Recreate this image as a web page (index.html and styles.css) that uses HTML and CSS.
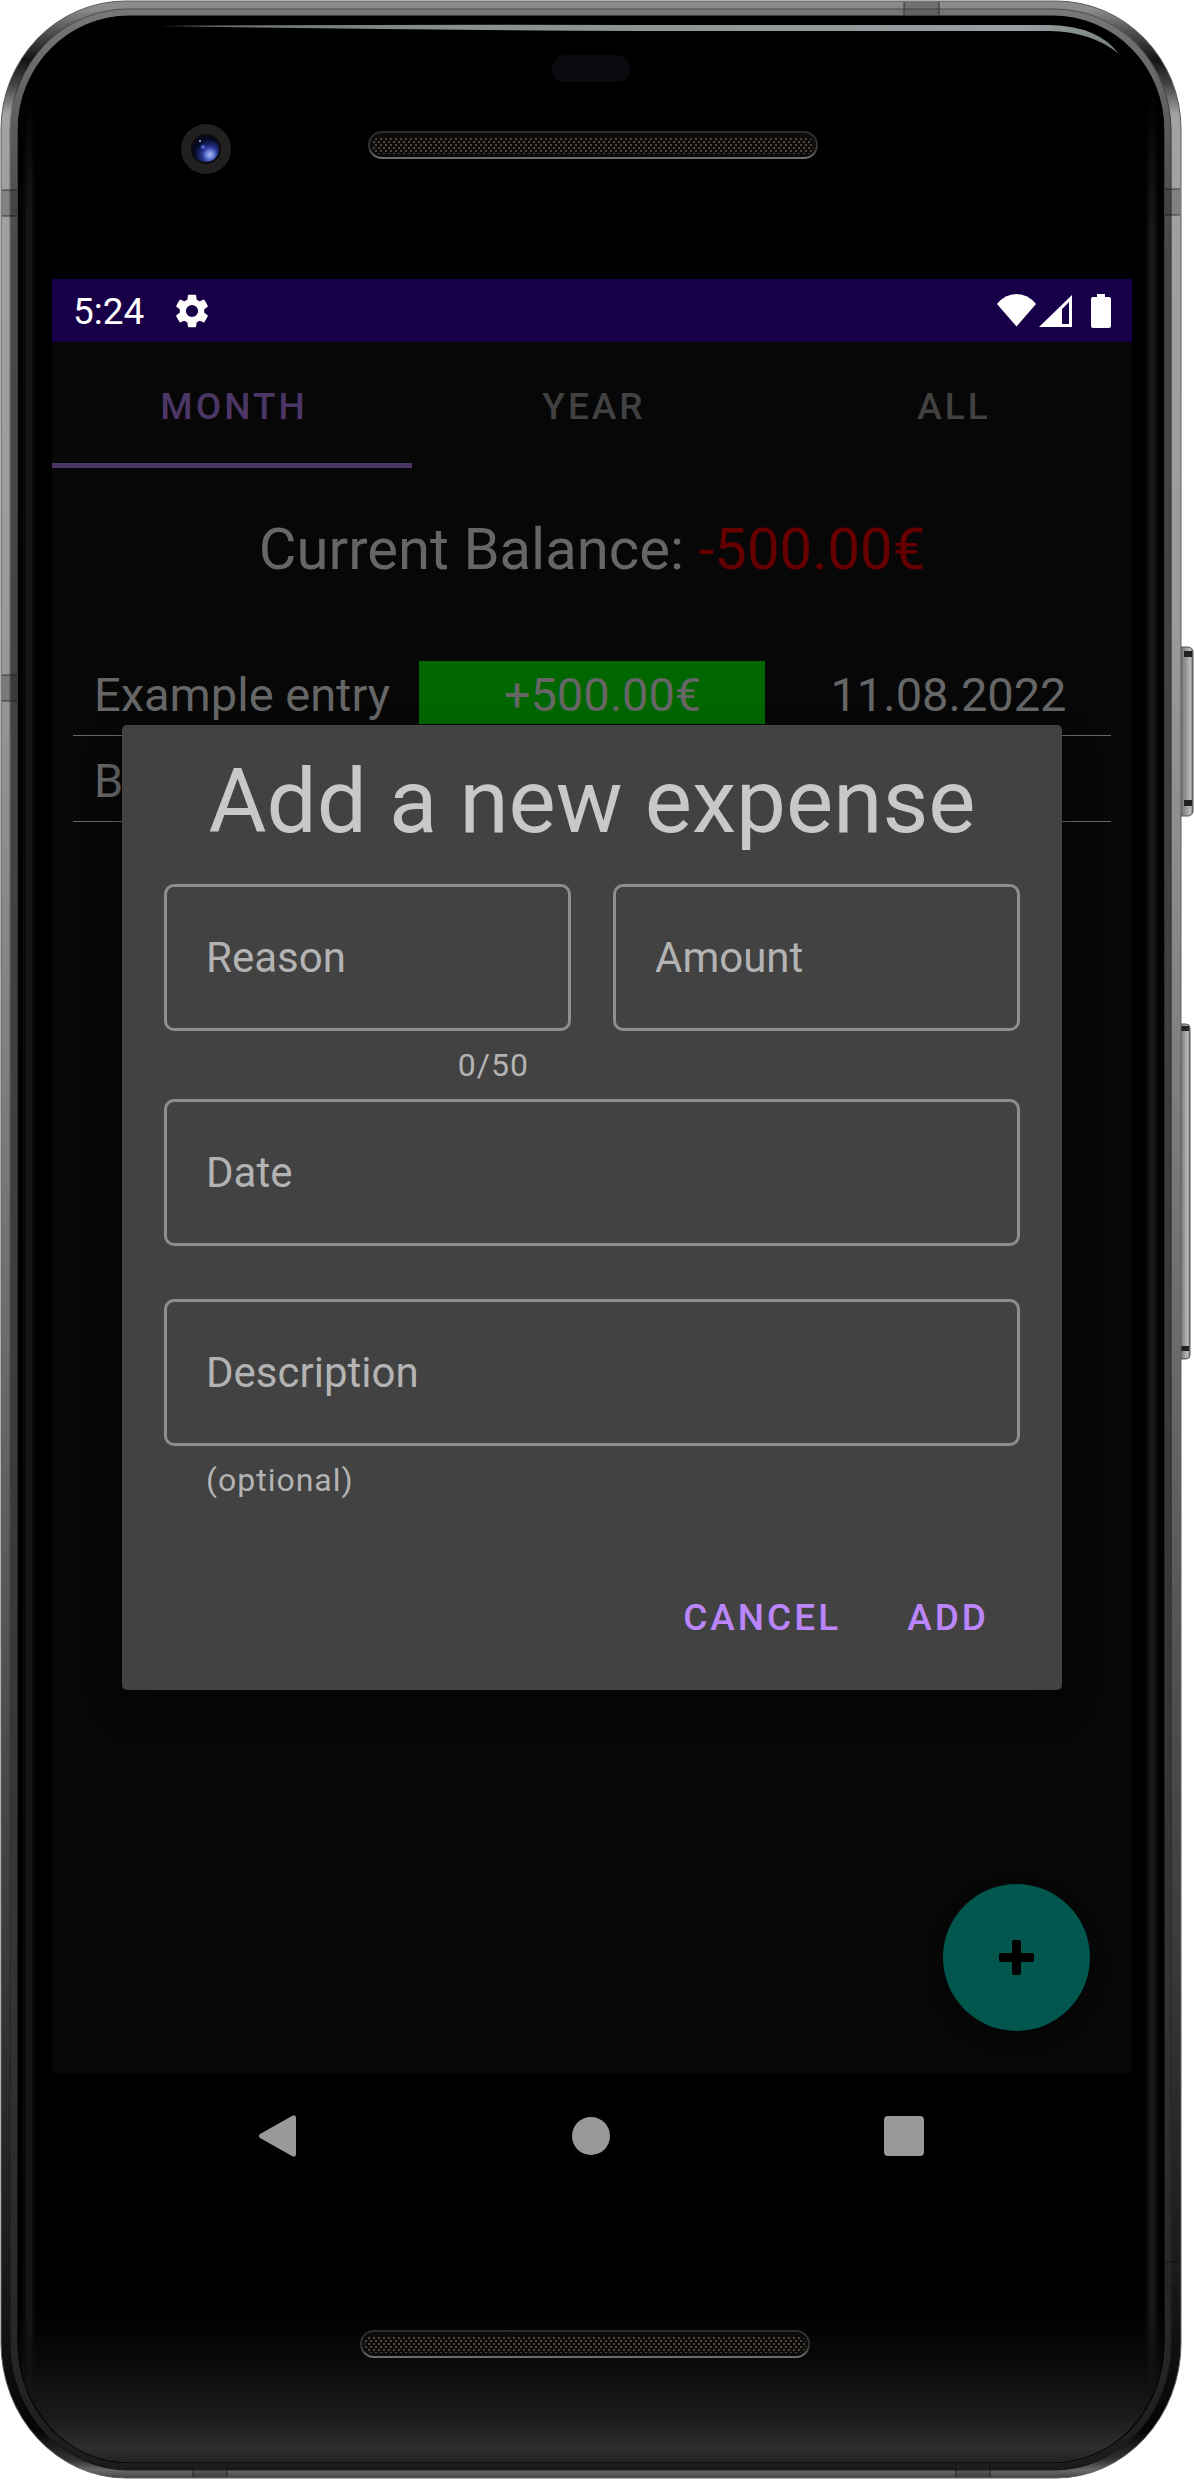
FILE: index.html
```html
<!DOCTYPE html>
<html lang="en">
<head>
<meta charset="utf-8">
<meta name="viewport" content="width=device-width, initial-scale=1">
<title>Expenses</title>
<link rel="stylesheet" href="styles.css">
</head>
<body>
<div class="phone">
  <svg class="shell" viewBox="0 0 1194 2480" preserveAspectRatio="none" aria-hidden="true">
    <defs>
      <linearGradient id="metal" gradientUnits="userSpaceOnUse" x1="0" y1="0" x2="0" y2="2480">
        <stop offset="0" stop-color="#8c8c8c"/>
        <stop offset=".004" stop-color="#8a8a8a"/>
        <stop offset=".012" stop-color="#555"/>
        <stop offset=".024" stop-color="#141414"/>
        <stop offset=".034" stop-color="#444"/>
        <stop offset=".046" stop-color="#a2a2a2"/>
        <stop offset=".25" stop-color="#9a9a9a"/>
        <stop offset=".45" stop-color="#7c7c7c"/>
        <stop offset=".6" stop-color="#606060"/>
        <stop offset=".78" stop-color="#3c3c3c"/>
        <stop offset=".93" stop-color="#161616"/>
        <stop offset=".98" stop-color="#050505"/>
        <stop offset=".992" stop-color="#333"/>
        <stop offset=".996" stop-color="#6a6a6a"/>
        <stop offset="1" stop-color="#3a3a3a"/>
      </linearGradient>
      <linearGradient id="seam" gradientUnits="userSpaceOnUse" x1="0" y1="0" x2="0" y2="2480">
        <stop offset="0" stop-color="#7a7a7a"/>
        <stop offset=".05" stop-color="#5c5c5c"/>
        <stop offset=".1" stop-color="#484848"/>
        <stop offset=".8" stop-color="#343434"/>
        <stop offset=".95" stop-color="#262626"/>
        <stop offset="1" stop-color="#1a1a1a"/>
      </linearGradient>
      <linearGradient id="glass" gradientUnits="userSpaceOnUse" x1="0" y1="2310" x2="0" y2="2463">
        <stop offset="0" stop-color="#000"/>
        <stop offset=".35" stop-color="#0a0a0a"/>
        <stop offset=".7" stop-color="#1a1a1a"/>
        <stop offset=".9" stop-color="#2e2e2e"/>
        <stop offset="1" stop-color="#222"/>
      </linearGradient>
      <linearGradient id="edge" gradientUnits="userSpaceOnUse" x1="0" y1="90" x2="0" y2="2400">
        <stop offset="0" stop-color="#222" stop-opacity="0"/>
        <stop offset=".06" stop-color="#222"/>
        <stop offset=".96" stop-color="#222"/>
        <stop offset="1" stop-color="#222" stop-opacity="0"/>
      </linearGradient>
      <linearGradient id="glare" x1="0" y1="0" x2="1" y2="0">
        <stop offset="0" stop-color="#5d6665"/>
        <stop offset=".3" stop-color="#87908f"/>
        <stop offset=".9" stop-color="#96a0a0"/>
        <stop offset="1" stop-color="#7b8483"/>
      </linearGradient>
      <linearGradient id="key" x1="0" y1="0" x2="1" y2="0">
        <stop offset="0" stop-color="#555"/>
        <stop offset=".35" stop-color="#777"/>
        <stop offset=".6" stop-color="#999"/>
        <stop offset=".85" stop-color="#bbb"/>
        <stop offset="1" stop-color="#666"/>
      </linearGradient>
      <linearGradient id="rim" x1="0" y1="0" x2="0" y2="1">
        <stop offset="0" stop-color="#2c2c2c"/>
        <stop offset=".6" stop-color="#333"/>
        <stop offset="1" stop-color="#716c68"/>
      </linearGradient>
      <radialGradient id="lens" cx=".65" cy=".72" r=".6">
        <stop offset="0" stop-color="#b4c0f4"/>
        <stop offset=".25" stop-color="#6a7fd8"/>
        <stop offset=".5" stop-color="#26348f"/>
        <stop offset="1" stop-color="#060920"/>
      </radialGradient>
      <pattern id="mesh" width="5" height="6" patternUnits="userSpaceOnUse">
        <rect width="5" height="6" fill="#0c0b0a"/>
        <rect x="0" y="0" width="2" height="2" fill="#4d4740"/>
        <rect x="3" y="3" width="2" height="2" fill="#4d4740"/>
      </pattern>
    </defs>
    <!-- side keys -->
    <g stroke="#555">
      <rect x="1176" y="647" width="17" height="169" rx="5" fill="url(#key)"/>
      <rect x="1176" y="1024" width="14" height="335" rx="4" fill="url(#key)"/>
    </g>
    <path d="M1184 651h8v6h-8zM1184 800h8v6h-8zM1181 1026h8v5h-8zM1181 1346h8v5h-8z" fill="#222"/>
    <!-- metal frame -->
    <path d="M1 129A125 128 0 0 1 126 1H1056A125 128 0 0 1 1181 129V2343A125 135 0 0 1 1056 2478H126A125 135 0 0 1 1 2343Z" fill="url(#metal)" stroke="#5c6060"/>
    <path d="M14 130A114 119 0 0 1 128 12H1055A113 119 0 0 1 1168 130V2343A113 124 0 0 1 1055 2467H128A114 124 0 0 1 14 2343Z" fill="none" stroke="url(#seam)" stroke-width="7"/>
    <path d="M10 130A118 122 0 0 1 128 9H1055A116 122 0 0 1 1171 130V2343A116 126 0 0 1 1055 2469H128A118 126 0 0 1 10 2343Z" fill="none" stroke="#111" stroke-opacity=".4"/>
    <g fill="#222" fill-opacity=".25">
      <rect x="2" y="190" width="15" height="26"/>
      <rect x="2" y="675" width="15" height="26"/>
      <rect x="1165" y="189" width="15" height="26"/>
      <rect x="1165" y="2262" width="15" height="26"/>
      <rect x="904" y="2" width="35" height="13"/>
      <rect x="193" y="2464" width="34" height="13"/>
      <rect x="956" y="2464" width="34" height="13"/>
    </g>
    <path d="M2 190h15M2 216h15M2 675h15M2 701h15M1165 189h15M1165 215h15M1165 2262h15M1165 2288h15M904 2v13M939 2v13M193 2464v13M227 2464v13M956 2464v13M990 2464v13" stroke="#111" stroke-opacity=".7"/>
    <!-- glass -->
    <path d="M18 130A111 114 0 0 1 129 16H1053A111 114 0 0 1 1164 130V2343A111 120 0 0 1 1053 2463H129A111 120 0 0 1 18 2343Z" fill="url(#glass)" stroke="#000"/>
    <g fill="url(#edge)">
      <rect x="23" y="90" width="12" height="2310" opacity=".3"/>
      <rect x="26" y="90" width="6" height="2310" opacity=".5"/>
      <rect x="1146" y="90" width="12" height="2310" opacity=".3"/>
      <rect x="1149" y="90" width="6" height="2310" opacity=".5"/>
    </g>
    <path d="M160 26Q400 24 640 25H1050Q1098 26 1119 54Q1093 32 1050 31H640Q400 30 160 26Z" fill="url(#glare)"/>
    <rect x="552" y="55" width="78" height="27" rx="13" fill="#090a0e"/>
    <!-- front camera -->
    <circle cx="206" cy="149" r="25" fill="#221f1f"/>
    <circle cx="206" cy="149" r="15" fill="#0a0a10"/>
    <circle cx="206" cy="149" r="13" fill="url(#lens)"/>
    <circle cx="203" cy="147" r="2" fill="#4a66d0"/>
    <circle cx="200" cy="141" r="1" fill="#b8c4ff"/>
    <!-- speakers -->
    <rect x="369" y="132" width="448" height="26" rx="13" fill="#0b0b0b" stroke="url(#rim)" stroke-width="2"/>
    <rect x="372" y="137" width="442" height="17" rx="8" fill="url(#mesh)"/>
    <rect x="361" y="2331" width="448" height="26" rx="13" fill="#0b0b0b" stroke="url(#rim)" stroke-width="2"/>
    <rect x="364" y="2336" width="442" height="17" rx="8" fill="url(#mesh)"/>
  </svg>

  <div class="screen">
    <header class="status">
      <span class="clock">5:24</span>
      <svg class="gear" viewBox="2 2 20 20" aria-hidden="true"><path fill="#fff" d="M19.14 12.94c.04-.3.06-.61.06-.94 0-.32-.02-.64-.07-.94l2.03-1.58a.49.49 0 0 0 .12-.61l-1.92-3.32a.49.49 0 0 0-.59-.22l-2.39.96c-.5-.38-1.03-.7-1.62-.94l-.36-2.54a.48.48 0 0 0-.48-.41h-3.84a.47.47 0 0 0-.47.41l-.36 2.54c-.59.24-1.13.57-1.62.94l-2.39-.96a.48.48 0 0 0-.59.22L2.74 8.87a.47.47 0 0 0 .12.61l2.03 1.58c-.05.3-.09.63-.09.94s.02.64.07.94l-2.03 1.58a.49.49 0 0 0-.12.61l1.92 3.32c.12.22.37.29.59.22l2.39-.96c.5.38 1.03.7 1.62.94l.36 2.54c.05.24.24.41.48.41h3.84c.24 0 .44-.17.47-.41l.36-2.54c.59-.24 1.13-.56 1.62-.94l2.39.96c.22.08.47 0 .59-.22l1.92-3.32a.47.47 0 0 0-.12-.61zM12 15.6A3.6 3.6 0 1 1 12 8.4a3.6 3.6 0 0 1 0 7.2z"/></svg>
      <svg class="signals" viewBox="0 0 115 34" aria-hidden="true">
        <g fill="#fff">
          <path d="M0 10Q8 0 19.500 0T39 10L19.500 32.500Z"/>
          <path fill-rule="evenodd" d="M42 33L75 1V33ZM65 15V30H72V8Z"/>
          <path d="M100 0h8v3h4q2 0 2 2v27q0 2-2 2h-16q-2 0-2-2V5q0-2 2-2h4z"/>
        </g>
      </svg>
    </header>

    <main class="app">
      <nav class="tabs">
        <button class="tab tab-active" type="button">MONTH</button>
        <button class="tab" type="button">YEAR</button>
        <button class="tab" type="button">ALL</button>
      </nav>
      <h1 class="balance">Current Balance: <span class="negative">-500.00€</span></h1>
      <table class="entries">
        <tbody>
          <tr>
            <td><div class="cell cell-name">Example entry</div></td>
            <td><div class="cell cell-income">+500.00€</div></td>
            <td><div class="cell">11.08.2022</div></td>
          </tr>
          <tr>
            <td><div class="cell cell-name">B</div></td>
            <td></td>
            <td></td>
          </tr>
        </tbody>
      </table>
      <button class="fab" type="button" aria-label="Add entry">
        <svg viewBox="0 0 35 35" width="35" height="35" aria-hidden="true"><path d="M15 0h5q2 0 2 2v11h11q2 0 2 2v5q0 2-2 2H22v11q0 2-2 2h-5q-2 0-2-2V22H2q-2 0-2-2v-5q0-2 2-2h11V2q0-2 2-2z"/></svg>
      </button>

      <div class="overlay">
        <form class="dialog" role="dialog" aria-labelledby="dialog-title">
          <h2 class="dialog-title" id="dialog-title">Add a new expense</h2>
          <div class="field-row">
            <div>
              <label class="field"><span class="field-label">Reason</span><input class="field-input" type="text" maxlength="50"></label>
              <p class="hint hint-end">0/50</p>
            </div>
            <label class="field"><span class="field-label">Amount</span><input class="field-input" type="text" inputmode="decimal"></label>
          </div>
          <label class="field field-date"><span class="field-label">Date</span><input class="field-input" type="text"></label>
          <label class="field"><span class="field-label">Description</span><input class="field-input" type="text"></label>
          <p class="hint">(optional)</p>
          <div class="actions">
            <button class="action" type="button">CANCEL</button>
            <button class="action" type="button">ADD</button>
          </div>
        </form>
      </div>
    </main>

    <footer class="navbar">
      <button class="nav-key" type="button" aria-label="Back"><svg width="38" height="42" viewBox="0 0 38 42" aria-hidden="true"><path fill="#999" d="M1 19L33 1Q37-1 37 3V39Q37 43 33 41L1 23Q-1 21 1 19Z"/></svg></button>
      <button class="nav-key" type="button" aria-label="Home"><svg width="38" height="38" viewBox="0 0 38 38" aria-hidden="true"><circle cx="19" cy="19" r="19" fill="#999"/></svg></button>
      <button class="nav-key" type="button" aria-label="Recent apps"><svg width="40" height="40" viewBox="0 0 40 40" aria-hidden="true"><rect width="40" height="40" rx="4" fill="#999"/></svg></button>
    </footer>
  </div>
</div>
</body>
</html>
```
FILE: styles.css
```css
* { box-sizing: border-box; }

body {
  margin: 0;
  background: #fff;
  font-family: Roboto, "Liberation Sans", sans-serif;
}

h1, h2, p { margin: 0; font-weight: 400; }

button {
  padding: 0;
  border: 0;
  background: none;
  font-family: inherit;
}

.phone {
  position: relative;
  padding: 279px 62px 281px 52px;
}

.shell {
  position: absolute;
  inset: 0;
  width: 100%;
  height: 100%;
}

.screen {
  position: relative;
  display: flex;
  flex-direction: column;
  aspect-ratio: 9 / 16;
}

/* status bar */
.status {
  display: flex;
  align-items: center;
  height: 63px;
  padding: 0 20px 0 21px;
  background: #180048;
  color: #fff;
}

.clock { padding-top: 2px; font-size: 37px; line-height: 63px; }
.gear { width: 34px; height: 34px; margin-left: 31px; }
.signals { width: 115px; height: 34px; margin-left: auto; }

/* app */
.app {
  position: relative;
  flex: 1;
  background: #070707;
  color: #666;
}

.tabs { display: grid; grid-template-columns: repeat(3, 1fr); }

.tab {
  height: 126px;
  padding: 7px 0 0 4px;
  border-bottom: 5px solid transparent;
  color: #414141;
  font-size: 37px;
  font-weight: 500;
  letter-spacing: 3px;
}

.tab-active { border-color: #4b3665; color: #4b3665; }

.balance {
  padding: 47px 0 67px;
  font-size: 58px;
  line-height: 68px;
  text-align: center;
}

.negative { color: #600; }

.entries {
  width: calc(100% - 42px);
  margin: 0 21px;
  border-spacing: 0;
  table-layout: fixed;
}

.entries tr { height: 86px; }

.entries td {
  padding: 11px 0;
  border-bottom: 1px solid #666;
}

.cell {
  height: 63px;
  padding: 5px 0 0 21px;
  font-size: 47px;
  line-height: 58px;
  text-align: center;
}

.cell-name { text-align: left; }
.cell-income { background: #060; }

.fab {
  position: absolute;
  right: 42px;
  bottom: 42px;
  display: grid;
  place-items: center;
  width: 147px;
  height: 147px;
  border-radius: 50%;
  background: #01574e;
  box-shadow: 0 8px 16px rgba(0, 0, 0, .3);
}

/* dialog */
.overlay {
  position: absolute;
  inset: 0;
  display: flex;
  align-items: center;
  padding: 0 70px;
}

.dialog {
  flex: 1;
  padding: 25px 42px 26px;
  border-radius: 5px;
  background: #424242;
  box-shadow: 0 16px 32px rgba(0, 0, 0, .4);
  color: #b3b3b3;
}

.dialog-title {
  margin-bottom: 30px;
  color: #c8c8c8;
  font-size: 89px;
  line-height: 104px;
  text-align: center;
}

.field-row {
  display: grid;
  grid-template-columns: 1fr 1fr;
  gap: 42px;
  align-items: start;
}

.field {
  display: grid;
  align-items: center;
  font-size: 42px;
}

.field-label, .field-input { grid-area: 1 / 1; }

.field-label { padding-left: 42px; }

.field-input {
  width: 100%;
  height: 147px;
  padding: 0 39px;
  border: 3px solid #8e8e8e;
  border-radius: 10px;
  background: none;
  color: inherit;
  font: inherit;
}

.field-date { margin-bottom: 53px; }

.hint {
  padding: 14px 42px;
  font-size: 32px;
  line-height: 40px;
  letter-spacing: 1px;
}

.hint-end { text-align: right; }

.actions {
  display: flex;
  justify-content: flex-end;
  gap: 24px;
  padding: 56px 10px 0 0;
}

.action {
  height: 94px;
  padding: 0 21px;
  color: #bb86fc;
  font-size: 37px;
  font-weight: 500;
  letter-spacing: 3px;
}

/* system navigation */
.navbar {
  display: flex;
  justify-content: space-between;
  align-items: center;
  height: 126px;
  padding: 0 208px 0 207px;
  background: #000;
}

.nav-key { display: flex; }
```
